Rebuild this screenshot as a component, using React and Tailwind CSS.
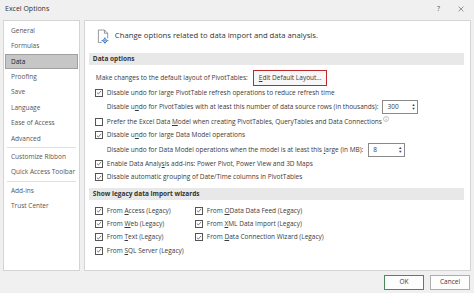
import React from 'react'

const font = { fontFamily: '"Open Sans", "Noto Sans", sans-serif' }

function Check({ checked = true }) {
  return (
    <span className="w-[8px] h-[8px] border border-[#555] bg-white flex items-center justify-center shrink-0">
      {checked && (
        <svg viewBox="0 0 10 10" className="w-[7px] h-[7px]">
          <path d="M1.5 5.2 L4 7.6 L8.6 2.2" fill="none" stroke="#333" strokeWidth="1.1" />
        </svg>
      )}
    </span>
  )
}

function Row({ checked, children, h = 'h-[13.5px]' }) {
  return (
    <div className={`flex items-center gap-[4px] ${h}`}>
      <Check checked={checked} />
      <span>{children}</span>
    </div>
  )
}

function Spin({ value, width }) {
  return (
    <div className={`${width} h-[14px] border border-[#8a8a8a] bg-white flex items-center justify-between pl-[4px] pr-[2px]`}>
      <span>{value}</span>
      <span className="flex flex-col leading-none text-[4px] text-[#444]">
        <span>▲</span>
        <span>▼</span>
      </span>
    </div>
  )
}

function SectionHeader({ children }) {
  return (
    <div className="h-[12px] bg-[#e8e8e8] mr-[6px] pl-[4px] flex items-center font-bold text-[#333]">{children}</div>
  )
}

const nav1 = ['General', 'Formulas', 'Data', 'Proofing', 'Save', 'Language', 'Ease of Access', 'Advanced']
const nav2 = ['Customize Ribbon', 'Quick Access Toolbar']
const nav3 = ['Add-ins', 'Trust Center']

function NavItem({ label }) {
  const active = label === 'Data'
  return (
    <div
      className={
        active
          ? 'h-[15.4px] flex items-center pl-[5px] bg-[#c6c6c6] border border-[#a0a0a0] text-[#222]'
          : 'h-[15.4px] flex items-center pl-[6px] text-[#555]'
      }
    >
      {label}
    </div>
  )
}

export default function App() {
  return (
    <div className="w-[474px] h-[293px] bg-[#f0f0f0] flex flex-col text-[6.5px] text-[#3a3a3a] overflow-hidden" style={font}>
      <div className="h-[18px] flex items-center justify-between pl-[5px] pr-[10px] text-[#333]">
        <span className="text-[7px]">Excel Options</span>
        <div className="flex items-center gap-[18px] text-[7px] text-[#555]">
          <span>?</span>
          <svg viewBox="0 0 10 10" className="w-[6px] h-[6px]">
            <path d="M1 1 L9 9 M9 1 L1 9" stroke="#555" strokeWidth="1" />
          </svg>
        </div>
      </div>

      <div className="flex gap-[4px] px-[3px] h-[253px] pt-[2px]">
        <div className="w-[77px] bg-white border border-[#d4d4d4] pt-[2px] px-[1px]">
          {nav1.map(l => <NavItem key={l} label={l} />)}
          <div className="border-t border-[#e0e0e0] my-[1px] mx-[2px]" />
          {nav2.map(l => <NavItem key={l} label={l} />)}
          <div className="border-t border-[#e0e0e0] my-[1px] mx-[2px]" />
          {nav3.map(l => <NavItem key={l} label={l} />)}
        </div>

        <div className="w-[388px] bg-white border border-[#d4d4d4] pl-[4px]">
          <div className="h-[30px] flex items-center pl-[8px] gap-[5px]">
            <svg viewBox="0 0 14 16" className="w-[13px] h-[15px]">
              <path d="M1.5 1 H8 L11.5 4.5 V10" fill="none" stroke="#777" strokeWidth="0.8" />
              <path d="M1.5 1 V14.5 H5" fill="none" stroke="#777" strokeWidth="0.8" />
              <path d="M8 1 V4.5 H11.5" fill="none" stroke="#777" strokeWidth="0.8" />
              <path d="M8.5 10 L11 12.5 L8.5 15 L6 12.5 Z" fill="none" stroke="#1e6fc8" strokeWidth="1" />
              <path d="M8.5 8.5 V16 M4.5 12.5 H12.5" stroke="#1e6fc8" strokeWidth="0.6" />
            </svg>
            <span className="text-[7.7px] text-[#333]">Change options related to data import and data analysis.</span>
          </div>

          <div className="mt-[2px]">
            <SectionHeader>Data options</SectionHeader>
          </div>

          <div className="pl-[6px] pt-[4px]">
            <div className="flex items-center h-[17px]">
              <span className="pl-[1px]">Make changes to the default layout of PivotTables:</span>
              <span className="ml-[5px] h-[16px] px-[5px] flex items-center border-[1.5px] border-[#c0282d] bg-[#f7f7f7]">
                <span><u>E</u>dit Default Layout...</span>
              </span>
            </div>
            <Row>Disable undo for large PivotTable refresh operations to reduce refresh time</Row>
            <div className="flex items-center h-[15px] pl-[12px]">
              <span>Disable u<u>n</u>do for PivotTables with at least this number of data source rows (in thousands):</span>
              <div className="ml-[4px]"><Spin value="300" width="w-[36px]" /></div>
            </div>
            <div className="flex items-center gap-[4px] h-[14px]">
              <Check checked={false} />
              <span>Prefer the Excel Data <u>M</u>odel when creating PivotTables, QueryTables and Data Connections</span>
              <svg viewBox="0 0 10 10" className="w-[6px] h-[6px] -mt-[5px] -ml-[3px]">
                <circle cx="5" cy="5" r="4.2" fill="none" stroke="#888" strokeWidth="0.8" />
                <path d="M5 4.3 V7.5 M5 2.5 V3.3" stroke="#888" strokeWidth="0.9" />
              </svg>
            </div>
            <Row>Disable u<u>n</u>do for large Data Model operations</Row>
            <div className="flex items-center h-[15px] pl-[12px]">
              <span>Disable undo for Data Model operations when the model is at least this <u>l</u>arge (in MB):</span>
              <div className="ml-[5px]"><Spin value="8" width="w-[37px]" /></div>
            </div>
            <Row>Enable Data Analy<u>s</u>is add-ins: Power Pivot, Power View and 3D Maps</Row>
            <Row>Disable automatic grouping of Date/Time columns in PivotTables</Row>
          </div>

          <div className="mt-[4px]">
            <SectionHeader>Show legacy data import wizards</SectionHeader>
          </div>

          <div className="pl-[6px] pt-[4px] grid grid-cols-[100px_1fr]">
            <div>
              <Row h="h-[13.3px]">From <u>A</u>ccess (Legacy)</Row>
              <Row h="h-[13.3px]">From <u>W</u>eb (Legacy)</Row>
              <Row h="h-[13.3px]">From <u>T</u>ext (Legacy)</Row>
              <Row h="h-[13.3px]">From <u>S</u>QL Server (Legacy)</Row>
            </div>
            <div>
              <Row h="h-[13.3px]">From <u>O</u>Data Data Feed (Legacy)</Row>
              <Row h="h-[13.3px]">From <u>X</u>ML Data Import (Legacy)</Row>
              <Row h="h-[13.3px]">From <u>D</u>ata Connection Wizard (Legacy)</Row>
            </div>
          </div>
        </div>
      </div>

      <div className="flex-1 flex items-center justify-end gap-[6px] pr-[4px]">
        <div className="w-[40px] h-[15px] border border-[#4a8a5a] bg-[#fdfdfd] flex items-center justify-center">OK</div>
        <div className="w-[40px] h-[15px] border border-[#adadad] bg-[#fdfdfd] flex items-center justify-center">Cancel</div>
      </div>
    </div>
  )
}
